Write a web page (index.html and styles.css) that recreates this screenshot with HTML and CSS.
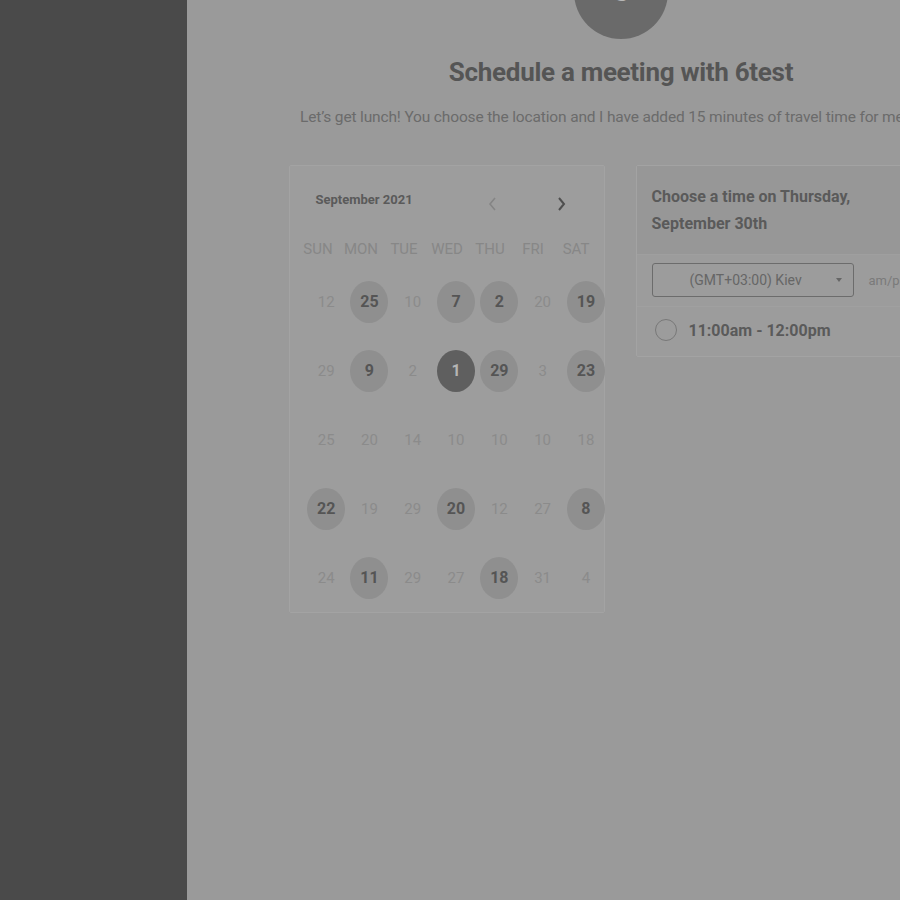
FILE: index.html
```html
<!DOCTYPE html>
<html>
<head>
<meta charset="utf-8">
<link rel="stylesheet" href="styles.css">
</head>
<body>
<div class="sidebar"></div>
<div class="main">
  <div class="content">
    <div class="avatar"><span>6</span></div>
    <h1 class="title">Schedule a meeting with 6test</h1>
    <p class="desc">Let’s get lunch! You choose the location and I have added 15 minutes of travel time for me both ways.</p>
    <div class="cards">
      <div class="calendar">
        <div class="cal-head">
          <span class="month">September 2021</span>
          <span class="nav prev"><svg width="10" height="16" viewBox="0 0 10 16"><path d="M8 2 L3 8 L8 14" fill="none" stroke="currentColor" stroke-width="1.6"/></svg></span>
          <span class="nav next"><svg width="10" height="16" viewBox="0 0 10 16"><path d="M2 2 L7 8 L2 14" fill="none" stroke="currentColor" stroke-width="2"/></svg></span>
        </div>
        <div class="weekdays">
          <span>SUN</span><span>MON</span><span>TUE</span><span>WED</span><span>THU</span><span>FRI</span><span>SAT</span>
        </div>
        <div class="days">
          <span>12</span><span class="on">25</span><span>10</span><span class="on">7</span><span class="on">2</span><span>20</span><span class="on">19</span>
          <span>29</span><span class="on">9</span><span>2</span><span class="sel">1</span><span class="on">29</span><span>3</span><span class="on">23</span>
          <span>25</span><span>20</span><span>14</span><span>10</span><span>10</span><span>10</span><span>18</span>
          <span class="on">22</span><span>19</span><span>29</span><span class="on">20</span><span>12</span><span>27</span><span class="on">8</span>
          <span>24</span><span class="on">11</span><span>29</span><span>27</span><span class="on">18</span><span>31</span><span>4</span>
        </div>
      </div>
      <div class="times">
        <div class="times-head">Choose a time on Thursday, September 30th</div>
        <div class="tz-row">
          <div class="tz-select"><span>(GMT+03:00) Kiev</span><span class="caret"></span></div>
          <span class="ampm">am/pm</span>
        </div>
        <div class="slot">
          <span class="radio"></span>
          <span class="slot-text">11:00am - 12:00pm</span>
        </div>
      </div>
    </div>
  </div>
</div>
</body>
</html>
```
FILE: styles.css
```css
html, body {
  margin: 0;
  padding: 0;
  height: 900px;
  overflow: hidden;
}
body {
  display: flex;
  width: 900px;
  font-family: Roboto, "Liberation Sans", sans-serif;
  background: #9a9a9a;
}
.sidebar {
  width: 187px;
  flex: none;
  background: #4a4a4a;
  height: 900px;
}
.main {
  width: 868px;
  flex: none;
  background: #9a9a9a;
  height: 900px;
}
.content {
  display: flex;
  flex-direction: column;
  align-items: center;
}
.avatar {
  width: 94px;
  height: 94px;
  border-radius: 50%;
  background: #6a6a6a;
  margin-top: -55px;
  display: flex;
  align-items: flex-start;
  justify-content: center;
  color: #b8b8b8;
  font-size: 34px;
  font-weight: 700;
  line-height: 34px;
  overflow: hidden;
}
.avatar span {
  margin-top: 27px;
}
.title {
  margin: 18px 0 0;
  font-size: 26px;
  font-weight: 700;
  color: #555;
  line-height: 30px;
  letter-spacing: -0.3px;
}
.desc {
  align-self: stretch;
  margin: 20px 0 0;
  padding-left: 113px;
  font-size: 15.5px;
  font-weight: 400;
  color: #6b6b6b;
  line-height: 20px;
  white-space: nowrap;
  overflow: hidden;
  letter-spacing: -0.15px;
}
.cards {
  display: flex;
  gap: 31px;
  margin-top: 38px;
  align-items: flex-start;
}
.calendar {
  width: 314px;
  height: 446px;
  border: 1px solid #a3a3a3;
  background: #9d9d9d;
  border-radius: 2px;
}
.cal-head {
  display: flex;
  align-items: center;
  height: 24px;
  margin-top: 21px;
  padding-left: 26px;
}
.month {
  font-size: 13px;
  font-weight: 700;
  color: #5a5a5a;
  width: 171px;
}
.nav {
  display: flex;
  margin-top: 10px;
}
.prev {
  color: #858585;
  width: 70px;
}
.next {
  color: #4f4f4f;
}
.weekdays {
  display: grid;
  grid-template-columns: repeat(7, 43px);
  margin-top: 28px;
  padding-left: 7px;
  font-size: 15px;
  color: #878787;
  text-align: center;
  line-height: 20px;
}
.days {
  display: grid;
  grid-template-columns: repeat(7, 43.3px);
  grid-auto-rows: 69px;
  margin-top: 8px;
  padding-left: 15px;
  width: 310px;
}
.days span {
  display: flex;
  align-items: center;
  justify-content: center;
  font-size: 15px;
  color: #8b8b8b;
}
.days span.on,
.days span.sel {
  width: 38px;
  height: 42px;
  border-radius: 50%;
  justify-self: center;
  align-self: center;
  background: #8f8f8f;
  font-size: 16px;
  font-weight: 700;
  color: #555;
}
.days span.sel {
  background: #5f5f5f;
  color: #b5b5b5;
}
.times {
  width: 316px;
  border: 1px solid #a3a3a3;
  background: #9c9c9c;
  border-radius: 2px;
}
.times-head {
  background: #979797;
  padding: 17px 40px 17px 15px;
  font-size: 16px;
  font-weight: 700;
  color: #5a5a5a;
  line-height: 27px;
  border-bottom: 1px solid #9f9f9f;
}
.tz-row {
  display: flex;
  align-items: center;
  padding: 8px 0 9px 15px;
  border-bottom: 1px solid #a0a0a0;
}
.tz-select {
  width: 200px;
  height: 32px;
  border: 1px solid #6c6c6c;
  border-radius: 3px;
  display: flex;
  align-items: center;
  font-size: 14px;
  color: #666;
  box-sizing: content-box;
}
.tz-select span:first-child {
  margin-left: 37px;
  flex: 1;
}
.caret {
  width: 0;
  height: 0;
  border-left: 3px solid transparent;
  border-right: 3px solid transparent;
  border-top: 4px solid #666;
  margin-right: 11px;
}
.ampm {
  margin-left: 15px;
  font-size: 13px;
  color: #7a7a7a;
}
.slot {
  display: flex;
  align-items: center;
  padding: 12px 0 15px 18px;
}
.radio {
  width: 20px;
  height: 20px;
  border: 1.5px solid #787878;
  border-radius: 50%;
}
.slot-text {
  margin-left: 12px;
  font-size: 16px;
  font-weight: 700;
  color: #5a5a5a;
}
```
